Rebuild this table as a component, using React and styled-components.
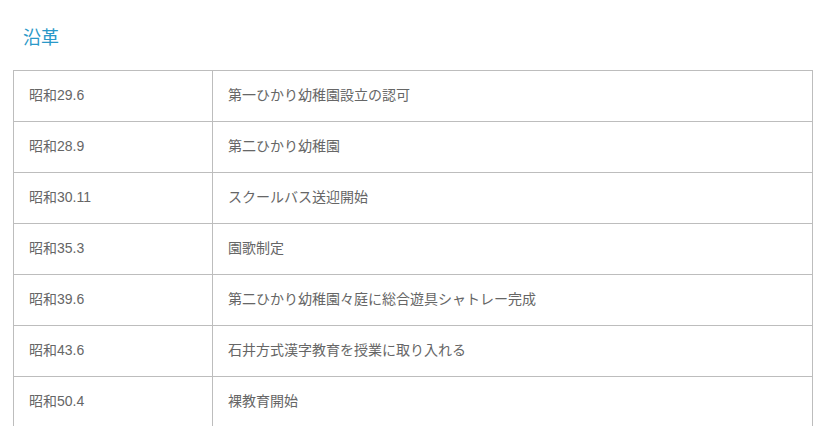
import React from "react";
import styled, { createGlobalStyle } from "styled-components";

const Global = createGlobalStyle`
  html, body { margin: 0; padding: 0; background: #fff; }
  body { font-family: "Liberation Sans", "Noto Sans CJK JP", sans-serif; }
`;

const Page = styled.div`
  padding: 26px 9px 0 13px;
`;

const Title = styled.h2`
  margin: 0 0 20px 10px;
  font-size: 18px;
  line-height: 24px;
  font-weight: 400;
  color: #2a98c8;
`;

const Table = styled.table`
  width: 800px;
  border-collapse: collapse;
  border: 1px solid #bdbdbd;
`;

const Row = styled.tr`
  border-bottom: 1px solid #bdbdbd;
`;

const Cell = styled.td`
  width: ${(p) => (p.$narrow ? "168px" : "auto")};
  padding: 14px 15px 16px;
  height: 20px;
  font-size: 14px;
  line-height: 20px;
  color: #666;
  border-right: 1px solid #bdbdbd;
  vertical-align: middle;
`;

const rows = [
  ["昭和29.6", "第一ひかり幼稚園設立の認可"],
  ["昭和28.9", "第二ひかり幼稚園"],
  ["昭和30.11", "スクールバス送迎開始"],
  ["昭和35.3", "園歌制定"],
  ["昭和39.6", "第二ひかり幼稚園々庭に総合遊具シャトレー完成"],
  ["昭和43.6", "石井方式漢字教育を授業に取り入れる"],
  ["昭和50.4", "裸教育開始"],
];

export default function App() {
  return (
    <>
      <Global />
      <Page>
        <Title>沿革</Title>
        <Table>
          <tbody>
            {rows.map(([d, t]) => (
              <Row key={d}>
                <Cell $narrow>{d}</Cell>
                <Cell>{t}</Cell>
              </Row>
            ))}
          </tbody>
        </Table>
      </Page>
    </>
  );
}
